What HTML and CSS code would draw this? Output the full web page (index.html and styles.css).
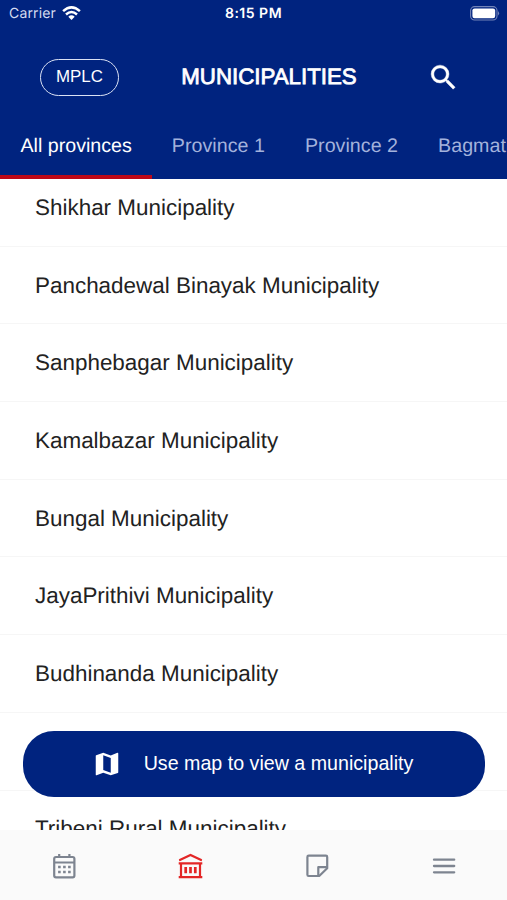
FILE: index.html
```html
<!DOCTYPE html>
<html lang="en">
<head>
<meta charset="utf-8">
<meta name="viewport" content="width=device-width, initial-scale=1">
<title>Municipalities</title>
<link rel="stylesheet" href="styles.css">
</head>
<body>
<div class="app">
  <header class="header">
    <div class="status">
      <div class="carrier"><span>Carrier</span>
        <svg width="19" height="15" viewBox="0 0 19 15" fill="none" stroke="#fff" stroke-width="2.5"><path d="M1.1 5.2Q9.5-2.5 17.9 5.2M4 8.5Q9.5 3.6 15 8.5"/><path d="M6.3 10.7Q9.5 8 12.7 10.7L9.5 14Z" fill="#fff" stroke="none"/></svg>
      </div>
      <span class="clock">8:15 PM</span>
      <svg class="battery" width="31" height="15" viewBox="0 0 31 15"><rect x="1.6" y=".6" width="26.4" height="13.4" rx="4" fill="none" stroke="#7284b8" stroke-width="1.1"/><rect x="3.4" y="2.4" width="22.8" height="9.8" rx="2.2" fill="#fff"/><path d="M29 5Q31.2 7.3 29 9.6Z" fill="#7284b8"/></svg>
    </div>
    <div class="titlebar">
      <button class="pill">MPLC</button>
      <h1>MUNICIPALITIES</h1>
      <svg class="search" width="33" height="33" viewBox="0 0 24 24" fill="#fff" stroke="#fff" stroke-width=".3"><path d="M15.5 14h-.79l-.28-.27A6.47 6.47 0 0 0 16 9.5 6.5 6.5 0 1 0 9.5 16c1.61 0 3.09-.59 4.23-1.57l.27.28v.79l5 4.99L20.49 19l-4.99-5zm-6 0C7.01 14 5 11.99 5 9.5S7.01 5 9.5 5 14 7.01 14 9.5 11.99 14 9.5 14z"/></svg>
    </div>
    <nav class="tabs">
      <span class="tab active">All provinces</span>
      <span class="tab">Province 1</span>
      <span class="tab">Province 2</span>
      <span class="tab">Bagmati</span>
    </nav>
  </header>
  <main class="content">
    <ul class="list">
      <li>Shikhar Municipality</li>
      <li>Panchadewal Binayak Municipality</li>
      <li>Sanphebagar Municipality</li>
      <li>Kamalbazar Municipality</li>
      <li>Bungal Municipality</li>
      <li>JayaPrithivi Municipality</li>
      <li>Budhinanda Municipality</li>
      <li></li>
      <li>Tribeni Rural Municipality</li>
    </ul>
    <button class="map-button">
      <svg width="30" height="30" viewBox="0 0 24 24" fill="#fff"><path d="M20.5 3l-.16.03L15 5.1 9 3 3.36 4.9c-.21.07-.36.25-.36.48V20.5c0 .28.22.5.5.5l.16-.03L9 18.9l6 2.1 5.64-1.9c.21-.07.36-.25.36-.48V3.5c0-.28-.22-.5-.5-.5zM15 19l-6-2.11V5l6 2.11V19z"/></svg>
      <span>Use map to view a municipality</span>
    </button>
  </main>
  <footer class="bottom">
    <svg width="30" height="30" viewBox="0 0 30 30" fill="none" stroke="#7d8490" stroke-width="2.2"><rect x="6.2" y="6" width="20.2" height="20.4" rx="1.8"/><path d="M6.2 11.5h20.2M11.2 2.9V6M21.4 2.9V6"/><path d="M10.1 16h2.6M15.1 16h2.6M20.1 16h2.6M10.1 21h2.6M15.1 21h2.6M20.1 21h2.6" stroke-width="2.6"/></svg>
    <svg width="30" height="30" viewBox="0 0 30 30" fill="none" stroke="#e32626" stroke-width="2.2"><path d="M4.5 9.2h-.2L15.5 3.9l11.2 5.3h-.2"/><path d="M3.7 12.3h23.6M3.7 26.2h23.6M6 12v14M25 12v14"/><path d="M10.7 16v6.3M15.5 16v6.3M20.3 16v6.3" stroke-width="2.7"/></svg>
    <svg width="30" height="30" viewBox="0 0 30 30" fill="none" stroke="#7d8490" stroke-width="2.2" stroke-linejoin="round"><path d="M6.7 4.6h17.2q1.3 0 1.3 1.3V17.3L17.2 25H6.7q-1.3 0-1.3-1.3V5.9q0-1.3 1.3-1.3Z"/><path d="M16.3 24.6V16.2h8.6"/></svg>
    <svg width="30" height="30" viewBox="0 0 30 30" stroke="#7d8490" stroke-width="2.3" stroke-linecap="round"><path d="M5 8.7h20.2M5 15h20.2M5 21.3h20.2"/></svg>
  </footer>
</div>
</body>
</html>
```
FILE: styles.css
```css
* { box-sizing: border-box; }
body { margin: 0; font-family: "Liberation Sans", Arial, sans-serif; text-rendering: geometricPrecision; }
button { font: inherit; color: #fff; padding: 0; }
svg { display: block; flex: none; }
.app { width: 507px; height: 900px; display: flex; flex-direction: column; overflow: hidden; background: #fff; }
.header { height: 178.5px; flex: none; background: #00237f; color: #fff; display: flex; flex-direction: column; }
.status { height: 28px; padding: 0 7px 1px 9px; display: grid; grid-template-columns: 1fr auto 1fr; align-items: center; font-family: Inter, sans-serif; font-size: 14px; }
.carrier { display: flex; align-items: center; gap: 6px; color: #d5dcf0; letter-spacing: .15px; }
.carrier svg { margin-top: -1px; }
.clock { font-weight: 600; letter-spacing: .5px; margin-left: -2px; }
.battery { justify-self: end; margin-top: -1px; }
.titlebar { height: 98px; padding: 0 47px 0 40px; display: flex; align-items: center; justify-content: space-between; }
.pill { width: 79px; height: 37px; border: 1.5px solid #dbe2f4; border-radius: 19px; background: none; font-size: 16.9px; }
h1 { margin: 0 0 0 -8px; font-size: 22.3px; line-height: 28px; font-weight: 400; -webkit-text-stroke: .8px #fff; }
.tabs { height: 52.5px; display: flex; overflow: hidden; white-space: nowrap; }
.tab { flex: none; padding: 8px 20px 0; font-size: 19.65px; line-height: 24px; letter-spacing: .03px; color: #a3b2dc; }
.active { color: #fff; border-bottom: 4px solid #bd0817; padding-left: 20.5px; letter-spacing: 0; }
.content { position: relative; flex: 1; min-height: 0; overflow: hidden; }
.list { list-style: none; margin: -9.5px 0 0; padding: 0; }
.list li { height: 77.7px; padding: 1px 0 0 35px; display: flex; align-items: center; border-bottom: 1px solid #f6f6f6; font-size: 22.45px; color: #222; white-space: nowrap; }
.map-button { position: absolute; left: 23px; right: 22px; bottom: 33px; height: 66px; border: 0; border-radius: 31px; background: #00237f; display: flex; align-items: center; justify-content: center; gap: 22px; padding-right: 3px; font-size: 19.65px; }
.bottom { height: 70.5px; flex: none; background: #fafafa; display: grid; grid-template-columns: repeat(4, 1fr); justify-items: center; padding-top: 21px; }
```
